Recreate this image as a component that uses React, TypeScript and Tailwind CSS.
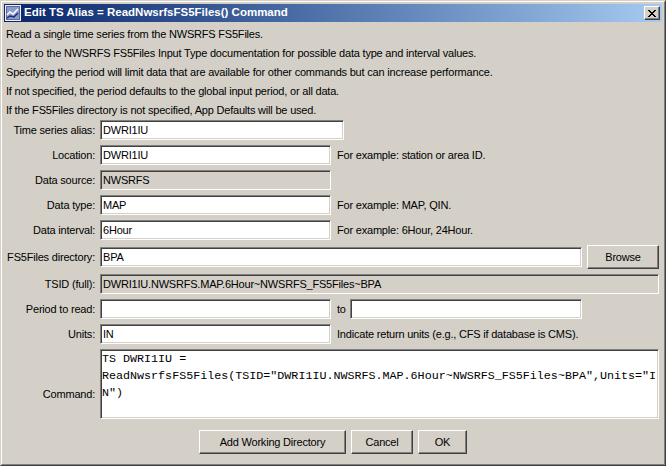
import React from "react";

const sunken =
	"border border-t-[#808080] border-l-[#808080] border-r-white border-b-white shadow-[inset_1px_1px_0_#404040,inset_-1px_-1px_0_#d4d0c8]";
const raised =
	"border border-t-white border-l-white border-r-[#404040] border-b-[#404040] shadow-[inset_-1px_-1px_0_#808080,inset_1px_1px_0_#d4d0c8]";

const notes = [
	"Read a single time series from the NWSRFS FS5Files.",
	"Refer to the NWSRFS FS5Files Input Type documentation for possible data type and interval values.",
	"Specifying the period will limit data that are available for other commands but can increase performance.",
	"If not specified, the period defaults to the global input period, or all data.",
	"If the FS5Files directory is not specified, App Defaults will be used.",
];

const closeRects = [
	[0, 0, 2], [6, 0, 2],
	[1, 1, 2], [5, 1, 2],
	[2, 2, 4],
	[3, 3, 2],
	[2, 4, 4],
	[1, 5, 2], [5, 5, 2],
	[0, 6, 2], [6, 6, 2],
];

function Field({ value = "", width, gray }: { value?: string; width: string; gray?: boolean }) {
	return (
		<div
			className={`${sunken} ${width} ${gray ? "bg-[#d4d0c8]" : "bg-white"} h-[20px] pl-[2px] leading-[18px] whitespace-nowrap overflow-hidden`}
		>
			{value}
		</div>
	);
}

function Row({ label, children, className = "" }: { label: string; children: React.ReactNode; className?: string }) {
	return (
		<div className={`flex items-center ${className}`}>
			<div className="w-[91px] text-right whitespace-nowrap">{label}</div>
			<div className="ml-[5px] flex items-center">{children}</div>
		</div>
	);
}

function Hint({ children }: { children: React.ReactNode }) {
	return <span className="ml-[6px] whitespace-nowrap">{children}</span>;
}

export default function App() {
	return (
		<div className="w-[666px] h-[466px] bg-[#d4d0c8] text-black text-[11px] tracking-[-0.2px] font-['Liberation_Sans',Arial,sans-serif] border border-t-[#d4d0c8] border-l-[#d4d0c8] border-r-[#404040] border-b-[#404040]">
			<div className="h-full flex flex-col p-[2px] border border-t-white border-l-white border-r-[#808080] border-b-[#808080]">
				{/* title bar */}
				<div className="h-[18px] flex items-center bg-linear-to-r from-[#0a246a] to-[#a6caf0]">
					<svg width="16" height="16" viewBox="0 0 16 16" className="ml-[1px]" shapeRendering="crispEdges">
						<rect x="0.5" y="0.5" width="15" height="15" fill="#c8d0e8" stroke="#f0f0f0" />
						<rect x="1.5" y="1.5" width="13" height="13" fill="#8c9cc8" stroke="#5a6aa0" />
						<polyline points="2,10 5,7 8,9 13,4" fill="none" stroke="#ffffff" strokeWidth="1.5" shapeRendering="auto" />
						<polyline points="2,13 5,11 9,12 13,8" fill="none" stroke="#1c2c78" strokeWidth="1.5" shapeRendering="auto" />
					</svg>
					<span className="ml-[3px] text-white font-bold text-[11.5px] tracking-normal whitespace-nowrap">
						Edit TS Alias = ReadNwsrfsFS5Files() Command
					</span>
					<div className={`${raised} ml-auto mr-[2px] w-[16px] h-[14px] bg-[#d4d0c8] flex items-center justify-center`}>
						<svg width="8" height="7" viewBox="0 0 8 7" shapeRendering="crispEdges">
							{closeRects.map(([x, y, w], i) => (
								<rect key={i} x={x} y={y} width={w} height="1" fill="#000" />
							))}
						</svg>
					</div>
				</div>

				{/* notes */}
				<div className="pt-[3px] pl-[2px]">
					{notes.map((n) => (
						<div key={n} className="leading-[19px] whitespace-nowrap">
							{n}
						</div>
					))}
				</div>

				{/* form */}
				<div className="flex flex-col">
					<Row label="Time series alias:">
						<Field value="DWRI1IU" width="w-[244px]" />
					</Row>
					<Row label="Location:" className="mt-[5px]">
						<Field value="DWRI1IU" width="w-[231px]" />
						<Hint>For example: station or area ID.</Hint>
					</Row>
					<Row label="Data source:" className="mt-[5px]">
						<Field value="NWSRFS" width="w-[231px]" gray />
					</Row>
					<Row label="Data type:" className="mt-[5px]">
						<Field value="MAP" width="w-[231px]" />
						<Hint>For example: MAP, QIN.</Hint>
					</Row>
					<Row label="Data interval:" className="mt-[5px]">
						<Field value="6Hour" width="w-[231px]" />
						<Hint>For example: 6Hour, 24Hour.</Hint>
					</Row>
					<Row label="FS5Files directory:" className="mt-[5px]">
						<Field value="BPA" width="w-[482px]" />
						<button className={`${raised} ml-[5px] w-[72px] h-[24px] bg-[#d4d0c8]`}>Browse</button>
					</Row>
					<Row label="TSID (full):" className="mt-[5px]">
						<Field value="DWRI1IU.NWSRFS.MAP.6Hour~NWSRFS_FS5Files~BPA" width="w-[559px]" gray />
					</Row>
					<Row label="Period to read:" className="mt-[5px]">
						<Field width="w-[231px]" />
						<span className="ml-[6px] w-[13px]">to</span>
						<Field width="w-[232px]" />
					</Row>
					<Row label="Units:" className="mt-[5px]">
						<Field value="IN" width="w-[231px]" />
						<Hint>Indicate return units (e.g., CFS if database is CMS).</Hint>
					</Row>
					<div className="flex items-start mt-[5px]">
						<div className="w-[91px] text-right leading-[19px] pt-[36px]">Command:</div>
						<div
							className={`${sunken} ml-[5px] w-[559px] h-[70px] bg-white pl-[1px] pt-[1px] font-['Liberation_Mono','Courier_New',monospace] text-[11.7px] tracking-normal leading-[17px] whitespace-pre`}
						>
							<div>TS DWRI1IU =</div>
							<div>ReadNwsrfsFS5Files(TSID="DWRI1IU.NWSRFS.MAP.6Hour~NWSRFS_FS5Files~BPA",Units="I</div>
							<div>N")</div>
						</div>
					</div>
				</div>

				{/* buttons */}
				<div className="flex justify-center gap-[5px] mt-[11px]">
					<button className={`${raised} w-[147px] h-[24px] bg-[#d4d0c8]`}>Add Working Directory</button>
					<button className={`${raised} w-[62px] h-[24px] bg-[#d4d0c8]`}>Cancel</button>
					<button className={`${raised} w-[49px] h-[24px] bg-[#d4d0c8]`}>OK</button>
				</div>
			</div>
		</div>
	);
}
